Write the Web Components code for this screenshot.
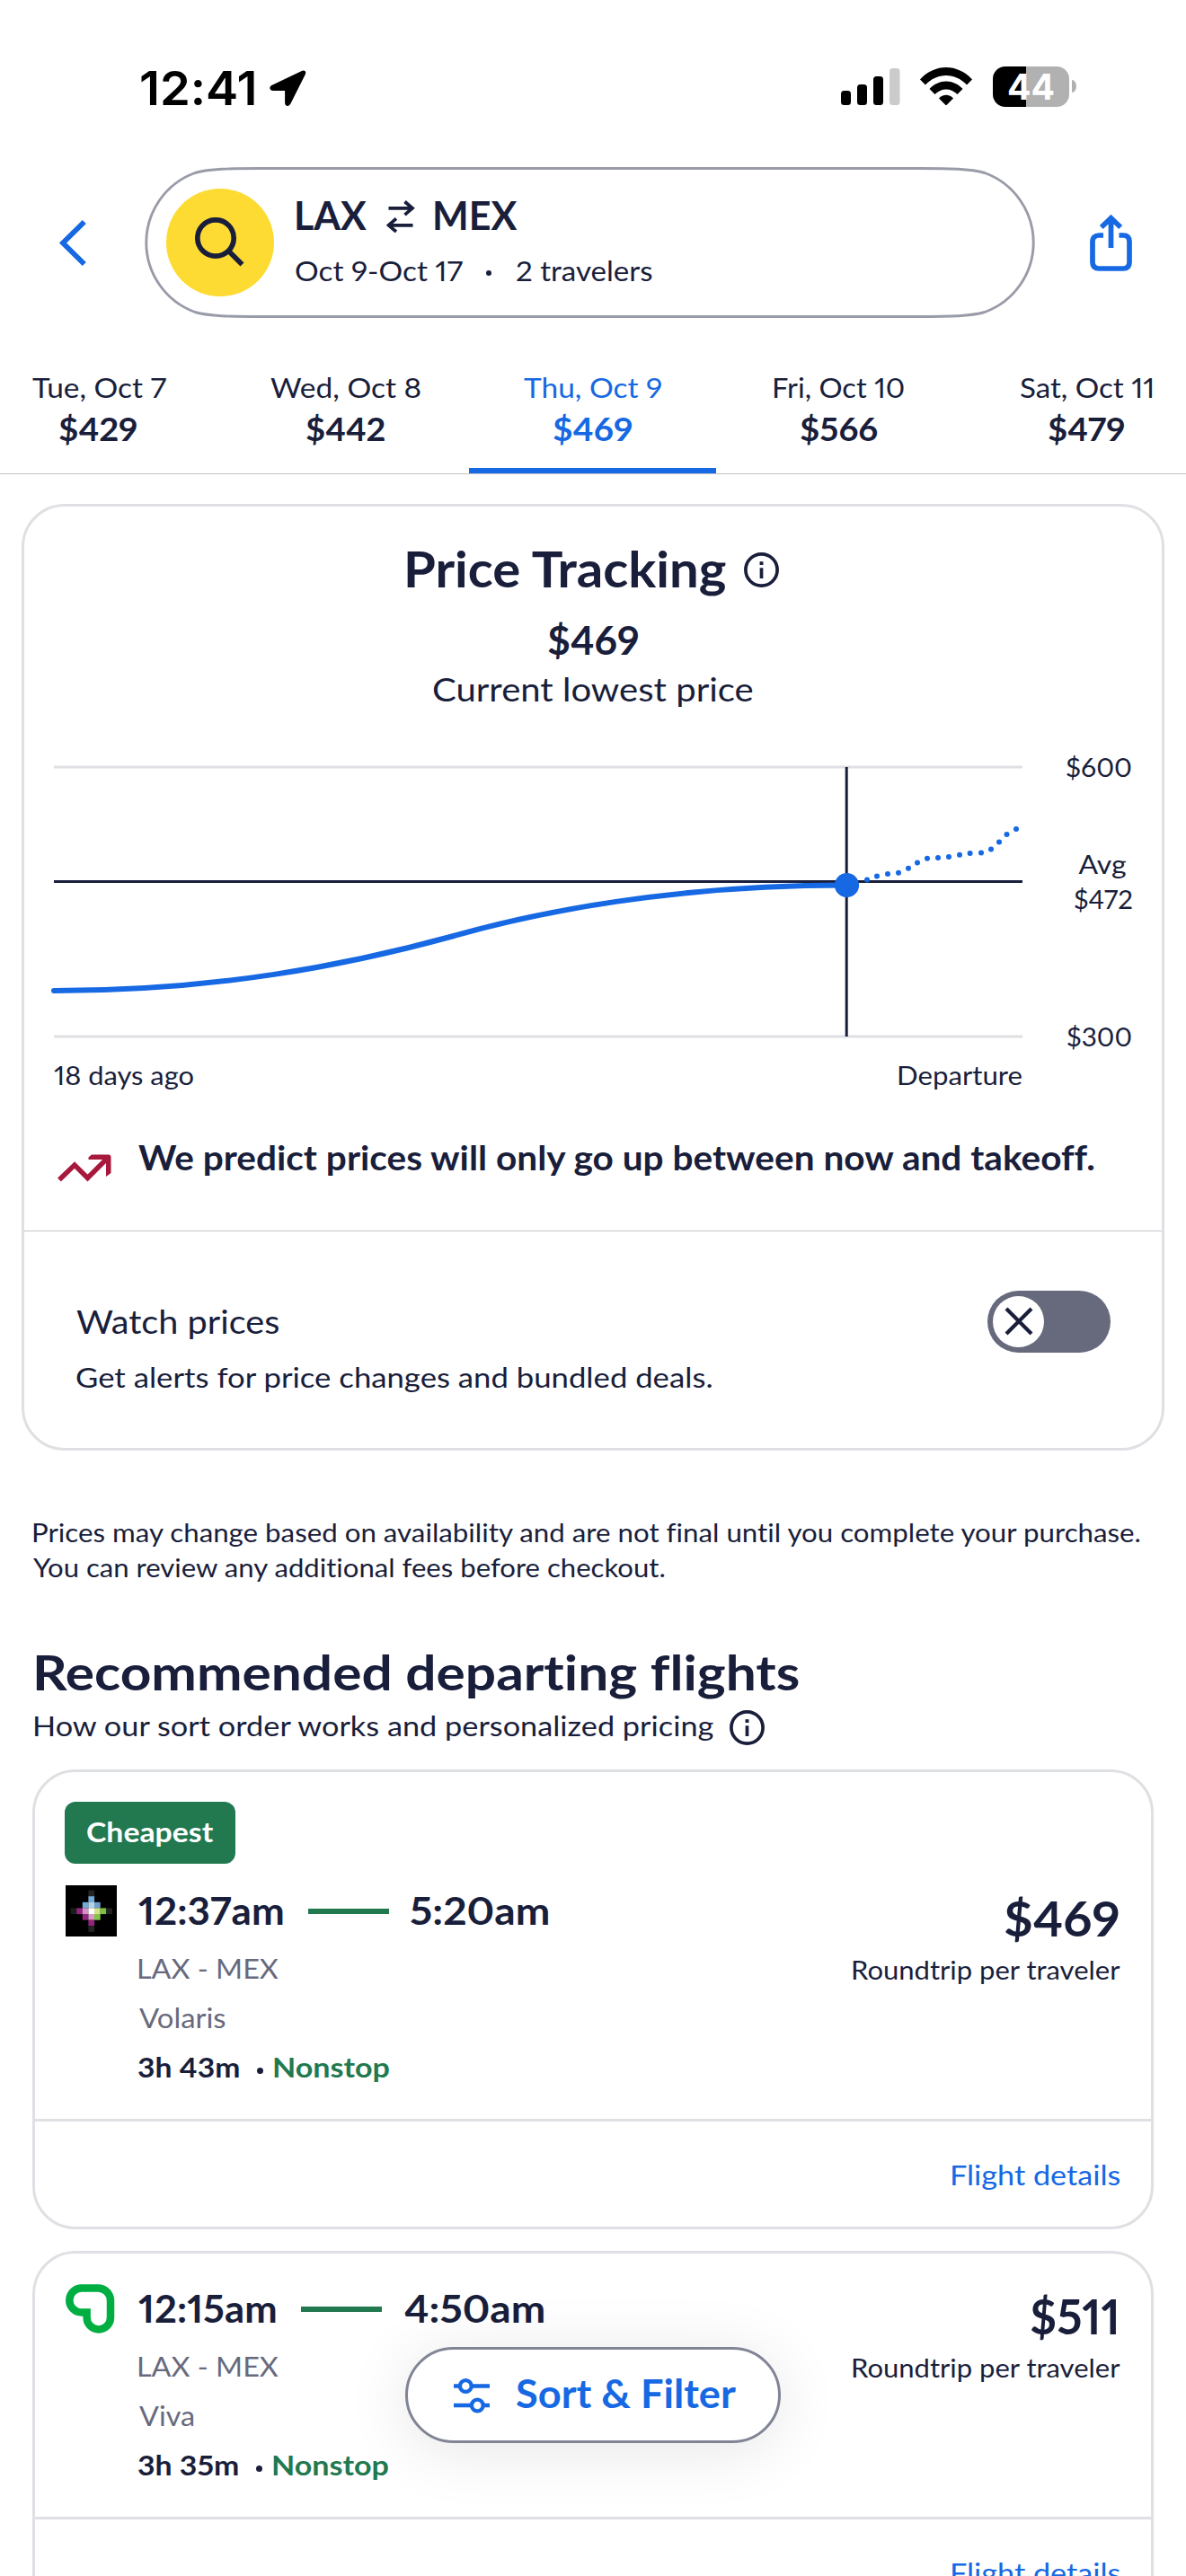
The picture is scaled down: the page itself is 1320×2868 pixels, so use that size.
<!DOCTYPE html>
<html lang="en">
<head>
<meta charset="utf-8">
<title>Flights LAX to MEX</title>
<style>
  html, body { margin: 0; padding: 0; background: #fff; }
  body { width: 1320px; height: 2868px; overflow: hidden; font-family: Lato, "Open Sans", sans-serif; color: #191E3B; }
</style>
</head>
<body>
<flight-results></flight-results>
<script>
const sheet = (el, html) => { el.attachShadow({ mode: 'open' }).innerHTML = html; };
const INK = '#191E3B', BLUE = '#1668E3', GREEN = '#227950', MUTED = '#676A7D';
const ruler = document.createElement('canvas').getContext('2d');

/* A line of text whose box is trimmed to cap height (cap) and ink width (w). */
class TextLine extends HTMLElement {
  connectedCallback() {
    if (this.shadowRoot) return;
    const cap = +this.getAttribute('cap'), w = +this.getAttribute('w');
    const inter = this.hasAttribute('inter');
    const family = inter ? 'Inter' : 'Lato';
    const size = cap / (inter ? 0.727 : 0.717);
    const weight = this.getAttribute('weight') || 400;
    const text = this.textContent;
    ruler.font = `${weight} ${size}px ${family}`;
    const m = ruler.measureText(text), first = ruler.measureText(text[0]), last = ruler.measureText(text[text.length - 1]);
    sheet(this, `<style>
      :host { display: flow-root; flex: none; width: ${w}px; height: ${cap}px; white-space: pre; }
      span { display: block; width: max-content; font: ${weight} ${size}px/${cap}px ${family}, sans-serif;
        margin-top: ${inter ? 0 : -0.0285 * size}px; font-kerning: normal; font-variant-ligatures: none; font-variant-numeric: proportional-nums; transform-origin: 0 0; }
    </style><span><slot></slot></span>`);
    const span = this.shadowRoot.querySelector('span');
    /* A proportional figure one has a narrower bearing than the tabular one that the canvas measures. */
    const trim = 0.04 * size;
    const left = text[0] === '1' && !inter ? m.actualBoundingBoxLeft + trim * 0.6 : m.actualBoundingBoxLeft;
    const right = m.width - m.actualBoundingBoxRight;
    const ink = span.getBoundingClientRect().width + left - right;
    const sx = Math.min(1.12, Math.max(0.92, w / ink));
    span.style.letterSpacing = (w / sx - ink) / (text.length - 1) + 'px';
    span.style.transform = `scaleX(${sx})`;
    span.style.marginLeft = left * sx + 'px';
  }
}
customElements.define('text-line', TextLine);

class InfoIcon extends HTMLElement {
  connectedCallback() {
    sheet(this, `<style>:host{display:block;flex:none;width:39px;height:39px}svg{display:block}</style>
    <svg width="39" height="39" viewBox="0 0 39 39" fill="none" stroke="${INK}"><circle cx="19.5" cy="19.5" r="17.6" stroke-width="3.7"/><path d="M19.5 17.3V29" stroke-width="3.7"/><path d="M19.5 10.2v3.8" stroke-width="3.9"/></svg>`);
  }
}
customElements.define('info-icon', InfoIcon);

class StatusBar extends HTMLElement {
  connectedCallback() {
    sheet(this, `<style>
      :host { display: flex; height: 112px; padding: 74px 122px 0 157px; justify-content: space-between; color: #000; }
      div { display: flex; align-items: flex-start; }
      .time text-line { margin-top: 4.7px; }
      .time svg { margin: 3px 0 0 16px; }
      .sig { margin: 1px 22px 0 0; } .wifi { margin: 1px 23px 0 0; }
      .bat { width: 85px; height: 45px; border-radius: 14px; background: linear-gradient(90deg, #000 37px, #B1B1B1 37px); color: #fff; }
      .bat text-line { margin: 8px 0 0 17px; }
      .nub { width: 5px; height: 14px; margin: 15px 0 0 3px; border-radius: 0 5px 5px 0 / 0 7px 7px 0; background: #B1B1B1; }
    </style>
    <div class="time"><text-line inter cap="38.4" w="126" weight="600">12:41</text-line>
      <svg width="42" height="42" viewBox="0 0 42 42"><path d="M38 3.2 4 19.4c-1.9 1-1.5 3.1.6 3.1H19.6V37.6c0 2.2 2.4 2.5 3.3.6L39.6 4.8C40.200 3.300 39.500 2.500 38 3.200Z" fill="#000" stroke="#000" stroke-width="3" stroke-linejoin="round"/></svg>
    </div>
    <div>
      <svg class="sig" width="66" height="42" viewBox="0 0 66 42"><rect x="0" y="26" width="11" height="16" rx="3.500"/><rect x="18" y="19" width="11" height="23" rx="3.500"/><rect x="36" y="10" width="11" height="32" rx="3.500"/><rect x="54" y="1" width="11.500" height="41" rx="3.500" fill="#CBCBCB"/></svg>
      <svg class="wifi" width="58" height="42" viewBox="0 0 58 42"><path d="M0 13.500C16-4.500 42-4.500 58 13.500L52 19.500C39 5.500 19 5.500 6 19.500Z"/><path d="M10.500 24C21 12.500 37 12.500 47.500 24L41.500 30C34.500 22.500 23.500 22.500 16.500 30Z"/><path d="M21 34.500C25.500 29.500 32.500 29.500 37 34.500L29 42.500Z"/></svg>
      <div class="bat"><text-line inter cap="29" w="51" weight="700">44</text-line></div><div class="nub"></div>
    </div>`);
  }
}
customElements.define('status-bar', StatusBar);

class SearchHeader extends HTMLElement {
  connectedCallback() {
    sheet(this, `<style>
      :host { display: flex; height: 168px; }
      svg { display: block; flex: none; }
      .back { margin: 58px 65px 0 65px; }
      .pill { display: flex; width: 991px; height: 168px; position: relative; }
      .outline { position: absolute; inset: 0; }
      .go { position: relative; width: 120px; height: 120px; margin: 24px 25px 0 24px; border-radius: 50%; background: #FDDB32; display: flex; }
      .go svg { margin: 32px 0 0 32px; }
      .trip { position: relative; }
      .route { display: flex; height: 31.300px; margin-top: 39.700px; }
      .route svg { margin: -3px 22px 0 21px; }
      .sub { display: flex; margin-top: 33.800px; margin-left: -1px; }
      .dot { width: 6px; height: 6px; border-radius: 3px; background: ${INK}; margin: 10.500px 28px 0 27px; }
      .share { margin: 52px 0 0 61px; }
    </style>
    <svg class="back" width="31" height="54" viewBox="0 0 31 54" fill="none" stroke="${BLUE}" stroke-width="5.800"><path d="M28.800 3 5 26.500 28.800 50"/></svg>
    <div class="pill">
      <svg class="outline" width="991" height="168" viewBox="0 0 991 168" fill="#fff" stroke="#999BA9" stroke-width="2.900"><path d="M129 1.500H862C896 1.500 919 2 935 6.500A82.500 82.500 0 0 1 935 161.500C919 166 896 166.500 862 166.500H129C95 166.500 72 166 56 161.500A82.500 82.500 0 0 1 56 6.500C72 2 95 1.500 129 1.500Z"/></svg>
      <div class="go"><svg width="56" height="56" viewBox="0 0 56 56" fill="none" stroke="${INK}" stroke-width="5.700"><circle cx="23" cy="23" r="20.200"/><path d="M37 37 52.500 52.500"/></svg></div>
      <div class="trip">
        <div class="route"><text-line cap="31.300" w="78.500" weight="700">LAX</text-line>
          <svg width="32" height="36" viewBox="0 0 32 36" fill="none" stroke="${INK}" stroke-width="3.700"><path d="M2.500 8.800H29M20.500 1.500 29 8.800 20.500 16.200M29.500 27.800H2.500M11 20.300 2.500 27.800 11 35"/></svg>
          <text-line cap="31.300" w="92" weight="700">MEX</text-line></div>
        <div class="sub"><text-line cap="22.400" w="185">Oct 9-Oct 17</text-line><span class="dot"></span><text-line cap="22.400" w="151">2 travelers</text-line></div>
      </div>
    </div>
    <svg class="share" width="48" height="66" viewBox="0 0 48 66" fill="none" stroke="${BLUE}" stroke-width="5.700"><path d="M15 24H10.500Q3 24 3 31V54Q3 61 10.500 61H37Q44 61 44 54V31Q44 24 37 24H32.500M23.500 38V5M12.800 15 23.500 4.800 34.200 15"/></svg>`);
  }
}
customElements.define('search-header', SearchHeader);

class FareDates extends HTMLElement {
  connectedCallback() {
    const days = [['Tue, Oct 7',148,'$429',86],['Wed, Oct 8',167,'$442',87],['Thu, Oct 9',153,'$469',87],['Fri, Oct 10',146,'$566',86],['Sat, Oct 11',147,'$479',84]];
    sheet(this, `<style>
      :host { display: flex; height: 173px; margin-left: -28px; width: 1376px; border-bottom: 1px solid #C3C4CA; }
      .day { width: 275px; flex: none; display: flex; flex-direction: column; align-items: center; padding-top: 66.500px; box-sizing: border-box; border-bottom: 6px solid transparent; }
      .day text-line + text-line { margin-top: 22px; }
      .on { color: ${BLUE}; border-color: ${BLUE}; }
    </style>` + days.map((d, i) => `<div class="day ${i === 2 ? 'on' : ''}"><text-line cap="22.500" w="${d[1]}">${d[0]}</text-line><text-line cap="26.300" w="${d[3]}" weight="700">${d[2]}</text-line></div>`).join(''));
  }
}
customElements.define('fare-dates', FareDates);

class PriceChart extends HTMLElement {
  connectedCallback() {
    const dots = [[965,979.6],[976,975.4],[988,973],[1000,971.8],[1011,966.8],[1021,960.4],[1032,955.7],[1044,955],[1056,954],[1068,951.8],[1079.600,950],[1092,949.6],[1103,945.4],[1112,937.5],[1120.500,929],[1131,923]];
    const label = (x, y, w, t) => `<text x="${x}" y="${y}" textLength="${w}" lengthAdjust="spacingAndGlyphs">${t}</text>`;
    sheet(this, `<style>:host{display:block;width:1266px;height:440px}svg{display:block}text{font:28.400px Lato,sans-serif;fill:${INK};font-variant-numeric:proportional-nums}</style>
    <svg width="1266" height="440" viewBox="27 782 1266 440" fill="none">
      <path d="M60 854H1138M60 1154H1138" stroke="#DFE0E4" stroke-width="3"/>
      <path d="M60 981.500H1138" stroke="${INK}" stroke-width="3"/>
      <path d="M942.200 854V1154" stroke="${INK}" stroke-width="3"/>
      <path d="M60 1103C240 1103 385 1075 505 1042 600 1015 750 985.500 942 985.500" stroke="${BLUE}" stroke-width="6" stroke-linecap="round"/>
      <circle cx="942.500" cy="985.500" r="13.600" fill="${BLUE}"/>
      <g fill="${BLUE}">${dots.map(d => `<circle cx="${d[0]}" cy="${d[1]}" r="3"/>`).join('')}</g>
      ${label(60, 1207.800, 156, '18 days ago')}${label(998, 1207.800, 140, 'Departure')}
      ${label(1186, 865, 74, '$600')}${label(1200.500, 973, 53, 'Avg')}${label(1195, 1011.500, 66, '$472')}${label(1187, 1165, 73, '$300')}
    </svg>`);
  }
}
customElements.define('price-chart', PriceChart);

class ToggleSwitch extends HTMLElement {
  connectedCallback() {
    sheet(this, `<style>
      :host { display: flex; align-items: center; box-sizing: border-box; width: 137px; height: 69px; padding-left: 6px; border-radius: 34.500px; background: ${MUTED}; }
      span { width: 57px; height: 57px; border-radius: 50%; background: #fff; display: flex; align-items: center; justify-content: center; }
    </style><span><svg width="32" height="32" viewBox="0 0 32 32" stroke="${INK}" stroke-width="4.200"><path d="M2 2 30 30M30 2 2 30"/></svg></span>`);
  }
}
customElements.define('toggle-switch', ToggleSwitch);

class PriceTracking extends HTMLElement {
  connectedCallback() {
    sheet(this, `<style>
      :host { display: block; box-sizing: border-box; width: 1272px; height: 1054px; margin: 33px 24px 0; border: 3px solid #DFE0E4; border-radius: 48px; }
      .top { display: flex; flex-direction: column; align-items: center; padding-top: 50.500px; }
      .title { display: flex; gap: 19px; }
      .predict { display: flex; height: 93px; box-sizing: content-box; margin-top: 55.300px; border-bottom: 1px solid #C3C4CA; padding-left: 37px; }
      .predict svg { display: block; margin: 7.500px 30px 0 0; }
      .watch { display: flex; justify-content: space-between; padding: 0 57px 0 58px; }
      .watch div { padding-top: 87px; }
      .watch div text-line + text-line { margin-top: 37.500px; }
      toggle-switch { margin-top: 65.500px; }
    </style>
    <div class="top">
      <div class="title"><text-line cap="39.700" w="355" weight="700">Price Tracking</text-line><info-icon></info-icon></div>
      <text-line cap="31" w="99.500" weight="700" style="margin-top:43.800px">$469</text-line>
      <text-line cap="26.700" w="356" style="margin-top:26.300px">Current lowest price</text-line>
    </div>
    <price-chart></price-chart>
    <div class="predict">
      <svg width="60" height="32" viewBox="0 0 60 32" fill="none" stroke="#A7183C" stroke-width="5.500" stroke-linejoin="round"><path d="M2 28.500 19 12 33.500 26.500 56 4" stroke-linejoin="miter"/><path d="M34.500 5.700V3.500L38 .5H56.500Q59.500 .5 59.500 3.500V21L54 25V6H34.500Z" fill="#A7183C" stroke="none"/></svg>
      <text-line cap="26.800" w="1064" weight="700">We predict prices will only go up between now and takeoff.</text-line>
    </div>
    <div class="watch">
      <div><text-line cap="27" w="225">Watch prices</text-line><text-line cap="22.300" w="707">Get alerts for price changes and bundled deals.</text-line></div>
      <toggle-switch></toggle-switch>
    </div>`);
  }
}
customElements.define('price-tracking', PriceTracking);

class FlightCard extends HTMLElement {
  connectedCallback() {
    const a = n => this.getAttribute(n);
    const line = (cap, key, weight = 400, cls = '') => { const [t, w] = a(key).split('|'); return `<text-line class="${cls}" cap="${cap}" w="${w}" weight="${weight}">${t}</text-line>`; };
    sheet(this, `<style>
      :host { display: block; box-sizing: border-box; width: 1248px; margin: 0 36px; border: 3px solid #DFE0E4; border-radius: 48px; padding-top: 33px; }
      .badge { display: flex; width: 190px; height: 69px; box-sizing: border-box; padding: 23.200px 0 0 25px; margin: 0 0 24px 33px; border-radius: 12px; background: ${GREEN}; color: #fff; }
      .row { display: flex; height: 260px; padding: 0 34px 0 33.500px; }
      .logo { width: 56px; flex: none; margin-right: 26px; }
      .info { flex: 1; padding-top: 14.200px; }
      .times, .dur { display: flex; }
      .bar { width: 90px; height: 6px; margin: 12px 25px 0 28px; background: ${GREEN}; }
      .muted { color: ${MUTED}; margin-top: 32.600px; }
      .times + .muted { margin-top: 36.800px; }
      .dur { margin-top: 32.600px; }
      .dot { width: 7px; height: 7px; border-radius: 50%; background: ${INK}; margin: 11px 13px 0 19px; }
      .green { color: ${GREEN}; }
      .cost { display: flex; flex-direction: column; align-items: flex-end; padding-top: 18px; }
      .price { margin: 0 3px 27.300px 0; }
      .foot { box-sizing: border-box; border-top: 3px solid #DFE0E4; height: 120px; display: flex; justify-content: flex-end; padding: 48.600px 34px 0; color: ${BLUE}; }
    </style>
    ${a('badge') ? `<div class="badge">${line(22.500, 'badge', 700)}</div>` : ''}
    <div class="row">
      <div class="logo"><slot></slot></div>
      <div class="info">
        <div class="times">${line(30.500, 'from', 700)}<span class="bar"></span>${line(30.500, 'to', 700)}</div>
        <text-line class="muted" cap="22.400" w="155.500">LAX - MEX</text-line>
        ${line(22.400, 'airline', 400, 'muted')}
        <div class="dur">${line(22.400, 'duration', 700)}<span class="dot"></span><text-line class="green" cap="22.400" w="128" weight="700">Nonstop</text-line></div>
      </div>
      <div class="cost">${line(39, 'price', 700, 'price')}<text-line cap="20.500" w="298">Roundtrip per traveler</text-line></div>
    </div>
    <div class="foot"><text-line cap="22.500" w="187.500">Flight details</text-line></div>`);
  }
}
customElements.define('flight-card', FlightCard);

class VolarisLogo extends HTMLElement {
  connectedCallback() {
    const px = [[3,0,'#242424'],[3,1,'#73ABD5'],[2,2,'#73ABD5'],[3,2,'#B4D3E7'],[4,2,'#6C9FC9'],[0,3,'#1C1C1C'],[1,3,'#91237F'],[2,3,'#D792C4'],[3,3,'#FFF'],[4,3,'#D3E38B'],[5,3,'#7DC143'],[6,3,'#242424'],[2,4,'#94247F'],[3,4,'#DA9BCB'],[4,4,'#83C545'],[3,5,'#94247F'],[3,6,'#242424']];
    sheet(this, `<style>:host,svg{display:block}</style><svg width="57" height="57" viewBox="0 0 57 57"><path d="M0 0H57V57H0Z"/>${px.map(p => `<rect x="${5.600 + p[0] * 6.600}" y="${5.600 + p[1] * 6.600}" width="6.700" height="6.700" fill="${p[2]}"/>`).join('')}</svg>`);
  }
}
customElements.define('volaris-logo', VolarisLogo);

class VivaLogo extends HTMLElement {
  connectedCallback() {
    sheet(this, `<style>:host{display:block;padding:1px 0 0 .5px}svg{display:block}</style><svg width="55" height="56" viewBox="0 0 55 56" fill="none" stroke="#00AE42" stroke-width="8.500"><path d="M17.700 4.500H36A14 14 0 0 1 50 18.500V37.200A13.200 13.200 0 0 1 23.600 37.200V31.400H17.700A13.400 13.400 0 0 1 17.700 4.500Z"/></svg>`);
  }
}
customElements.define('viva-logo', VivaLogo);

class SortFilter extends HTMLElement {
  connectedCallback() {
    sheet(this, `<style>
      :host { position: absolute; left: 451px; top: 2613px; width: 418px; height: 107px; box-sizing: border-box; border: 3.500px solid #818495; border-radius: 54px; background: #fff; display: flex; color: ${BLUE}; box-shadow: 0 8px 70px rgba(0,0,0,.1); }
      svg { display: block; margin: 31px 30px 0 51px; }
      text-line { margin-top: 34.500px; }
    </style>
    <svg width="40" height="40" viewBox="0 0 40 40" fill="none" stroke="${BLUE}" stroke-width="4.300"><path d="M0 9.500H7M19 9.500H40M0 31H20M32 31H40"/><circle cx="13.300" cy="9.500" r="6.400"/><circle cx="26.300" cy="31" r="6.400"/></svg>
    <text-line cap="31.300" w="244.500" weight="700">Sort &amp; Filter</text-line>`);
  }
}
customElements.define('sort-filter', SortFilter);

class FlightResults extends HTMLElement {
  connectedCallback() {
    sheet(this, `<style>
      :host { display: block; position: relative; width: 1320px; height: 2868px; overflow: hidden; background: #fff; }
      .note { padding: 81.500px 0 0 37px; }
      .note text-line + text-line { margin-top: 18.500px; }
      h2 { margin: 87.500px 0 0 40px; }
      .sort { display: flex; margin: 29px 0 0 38px; height: 59px; }
      .sort info-icon { margin: -7.500px 0 0 18px; }
      .list { display: flex; flex-direction: column; gap: 24px; }
    </style>
    <status-bar></status-bar>
    <search-header></search-header>
    <fare-dates></fare-dates>
    <price-tracking></price-tracking>
    <div class="note"><text-line cap="20.500" w="1232">Prices may change based on availability and are not final until you complete your purchase.</text-line><text-line cap="20.500" w="703">You can review any additional fees before checkout.</text-line></div>
    <h2><text-line cap="38.700" w="848" weight="700">Recommended departing flights</text-line></h2>
    <div class="sort"><text-line cap="22.300" w="756">How our sort order works and personalized pricing</text-line><info-icon></info-icon></div>
    <div class="list">
      <flight-card badge="Cheapest|140.500" from="12:37am|160" to="5:20am|153.500" airline="Volaris|96" duration="3h 43m|112" price="$469|126"><volaris-logo></volaris-logo></flight-card>
      <flight-card from="12:15am|152" to="4:50am|155.500" airline="Viva|60.500" duration="3h 35m|111" price="$511|97.500"><viva-logo></viva-logo></flight-card>
    </div>
    <sort-filter></sort-filter>`);
  }
}
customElements.define('flight-results', FlightResults);
</script>
</body>
</html>
